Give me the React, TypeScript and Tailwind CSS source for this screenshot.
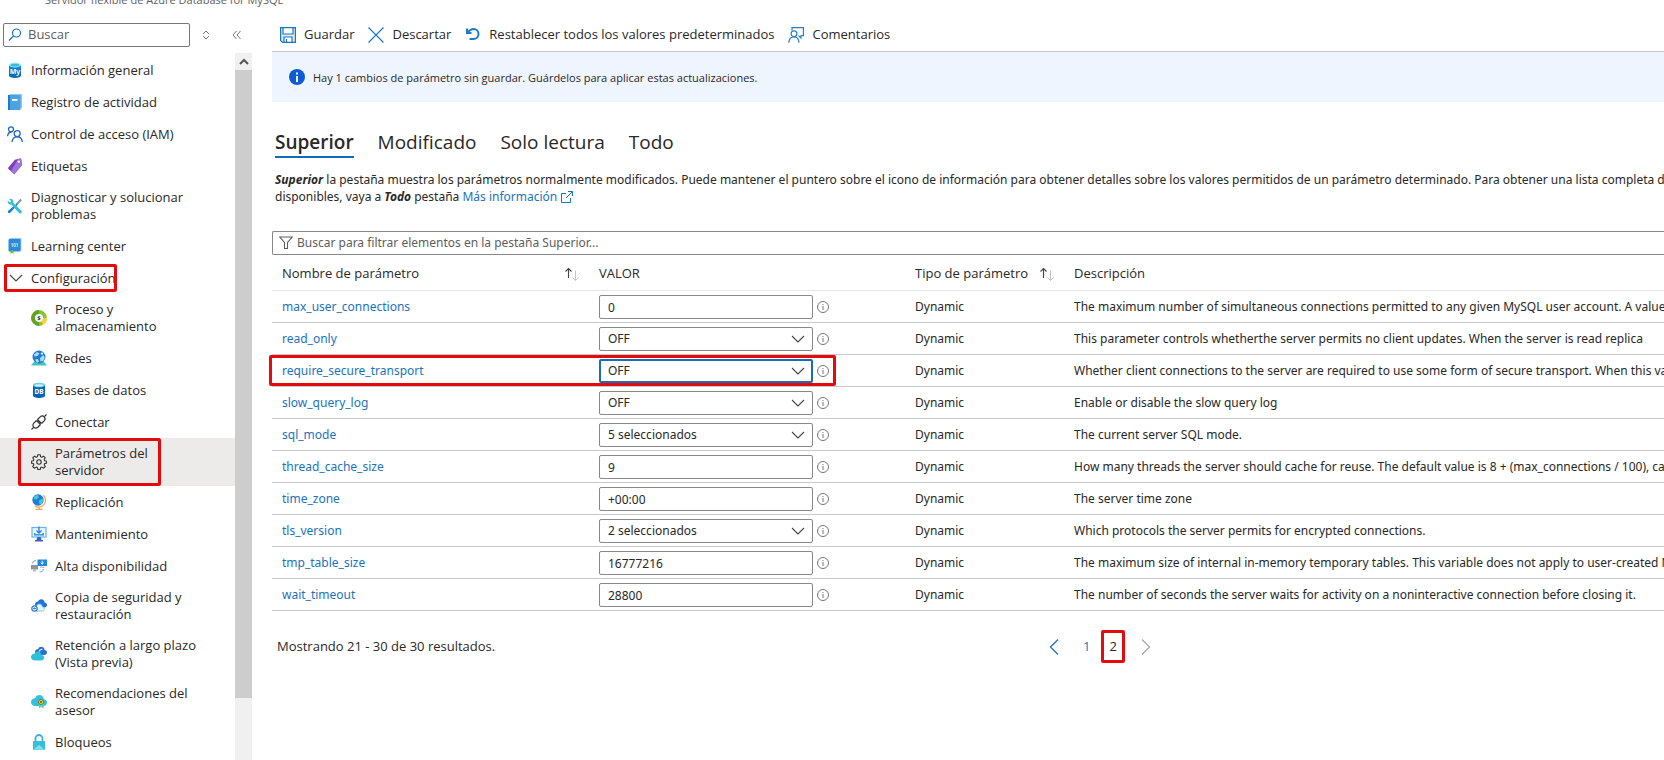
import type { ReactNode } from "react";

type IconProps = { className?: string };

const MySqlIcon = () => (
  <svg viewBox="0 0 16 16" className="size-4">
    <path d="M2 3v10.5C2 14.9 4.7 16 8 16s6-1.1 6-2.5V3z" fill="#0f6cbd" />
    <path d="M2 3v3.5c0 1.2 2.7 2 6 2s6-.8 6-2V3z" fill="#1b7fd0" />
    <ellipse cx="8" cy="3" rx="6" ry="2.4" fill="#9beaf7" />
    <ellipse cx="8" cy="3.2" rx="4.4" ry="1.4" fill="#32bedd" />
    <text x="8" y="12" textAnchor="middle" fontSize="7" fontWeight="700" fill="#fff" fontFamily="Noto Sans">My</text>
  </svg>
);
const LogIcon = () => (
  <svg viewBox="0 0 16 16" className="size-4">
    <path d="M2.5 0h11.7a.8.8 0 0 1 .8.8v13.4H4z" fill="#8fc7f1" />
    <rect x="1" y="1" width="12.6" height="15" rx="1" fill="#4ba3e3" />
    <rect x="1" y="1" width="2" height="15" fill="#2079c4" />
    <rect x="5" y="5" width="5.6" height="1.8" fill="#fff" />
  </svg>
);
const PeopleIcon = () => (
  <svg viewBox="0 0 16 16" className="size-4" fill="none" stroke="#2068c8" strokeWidth="1.3">
    <circle cx="4" cy="3.3" r="2.5" />
    <circle cx="10.2" cy="7.6" r="3" />
    <path d="M.6 10.2C.8 7.6 2 6 4.6 6M5 16c.3-3.2 2.3-5.2 5.2-5.2 2.8 0 4.8 2 5.2 5.2" />
  </svg>
);
const TagIcon = () => (
  <svg viewBox="0 0 16 16" className="size-4">
    <path d="M8.6 1.400 13.200.6c.6 0 1 .3 1.100.9l.5 5c0 .500 0 .800-.3 1.200l-6.600 7.700c-.4.4-.9.400-1.300.1L1.400 11c-.4-.400-.4-1 0-1.400l6.300-7.700c.2-.3.500-.4.900-.5z" fill="#7b3fc0" />
    <path d="m11 1 2.200-.4c.6 0 1 .3 1.100.9l.5 5c0 .500 0 .800-.3 1.200l-6.600 7.700c-.4.4-.9.400-1.300.1L4 13.200z" fill="#a273d8" />
    <circle cx="11.800" cy="3.600" r="1.200" fill="#fff" />
  </svg>
);
const ToolsIcon = () => (
  <svg viewBox="0 0 16 16" className="size-4">
    <path d="M13.8 1.2 9.4 5.8M14.6 2 10 6.4" stroke="#8a9aa5" strokeWidth="1.2" />
    <path d="m9.8 5.4 1 1-7.6 8.4c-.6.6-1.4.6-2 0s-.5-1.4.1-2z" fill="#1a7fc6" />
    <path d="M5.900 2.200C5 .9 3.400.5 2.100 1l2.200 2.200-1.200 1.400L.8 2.500C.3 3.900.8 5.500 2.200 6.300c.7.4 1.500.5 2.200.3l7.400 8.200c.6.7 1.700.9 2.400.3.800-.6.800-1.700.2-2.400L6.500 4.900c.2-.9 0-1.900-.6-2.700z" fill="#32c0dd" />
  </svg>
);
const LearnIcon = () => (
  <svg viewBox="0 0 16 16" className="size-4">
    <path d="M2.800 0h11.600v12.500H2.800z" fill="#8fc7f1" />
    <rect x="1.500" y="1" width="12" height="12.500" rx="1" fill="#2e8ad8" />
    <path d="M3.500 12.500h3V16L5 14.800 3.500 16z" fill="#6fbf3a" />
    <text x="7.500" y="8.500" textAnchor="middle" fontSize="4.500" fontWeight="700" fill="#c4e7ff" fontFamily="Noto Sans">101</text>
  </svg>
);
const ComputeIcon = () => (
  <svg viewBox="0 0 16 16" className="size-4">
    <circle cx="8" cy="8" r="6" fill="#fff" stroke="#86c232" strokeWidth="3.800" />
    <path d="M8 2A6 6 0 0 0 8 14" fill="none" stroke="#5fa524" strokeWidth="3.800" />
    <path d="M14 8A6 6 0 0 1 11 13.100" fill="none" stroke="#ffd02e" strokeWidth="3.800" />
    <text x="8" y="10.300" textAnchor="middle" fontSize="6" fontWeight="700" fill="#222" fontFamily="Noto Sans">$</text>
  </svg>
);
const NetworkIcon = () => (
  <svg viewBox="0 0 16 16" className="size-4">
    <path d="M3.200 11.500h9.600L16 15.500H0z" fill="#3fc9b4" />
    <circle cx="8" cy="7" r="6.500" fill="#1f7ad4" />
    <path d="M3 4.500 6 2l2.500 1.500L6.500 6 3.500 6.500zM9 8l3.500-3 1.300 3-1.500 3-3 .5zM4 9.500l3-.5 1 2.500-2 1.500z" fill="#a5dcfb" />
    <circle cx="11" cy="3.600" r="1.200" fill="#d5f0ff" />
  </svg>
);
const DatabaseIcon = () => (
  <svg viewBox="0 0 16 16" className="size-4">
    <path d="M2 3v10.500C2 14.900 4.700 16 8 16s6-1.100 6-2.500V3z" fill="#0a62b5" />
    <ellipse cx="8" cy="3" rx="6" ry="2.300" fill="#5fd3ea" />
    <ellipse cx="8" cy="3.400" rx="4.200" ry="1.100" fill="#c5f3fa" />
    <text x="8" y="12" textAnchor="middle" fontSize="6.500" fontWeight="700" fill="#fff" fontFamily="Noto Sans">DB</text>
  </svg>
);
const PlugIcon = () => (
  <svg viewBox="0 0 16 16" className="size-4" fill="none" stroke="#333" strokeWidth="1.200">
    <path d="M.5 15.500 2.600 13.400M13.400 2.600 15.500.5M6.500 5.500l4 4M5.500 6.500l4 4" />
    <path d="M6.500 5.500 9.200 2.800c1.200-1.200 2.900-1.200 4 0s1.100 2.800 0 4l-2.700 2.700M5.500 6.500 2.800 9.200c-1.200 1.200-1.200 2.900 0 4s2.800 1.100 4 0l2.700-2.700" />
  </svg>
);
const GearIcon = () => (
  <svg viewBox="0 0 16 16" className="size-4" fill="none" stroke="#333" strokeWidth="1.100" strokeLinejoin="round">
    <path d="M6.800.7h2.400l.4 2 1.300.5 1.700-1.100 1.700 1.700-1.100 1.700.5 1.300 2 .4v1.900l-2 .4-.5 1.300 1.100 1.700-1.700 1.700-1.700-1.100-1.300.5-.4 2H6.800l-.4-2-1.300-.5-1.700 1.100-1.700-1.700 1.100-1.700-.5-1.300-2-.4V7.200l2-.4.5-1.300-1.100-1.700 1.700-1.700 1.700 1.100 1.300-.5z" />
    <circle cx="8" cy="8" r="2.200" />
  </svg>
);
const GlobeIcon = () => (
  <svg viewBox="0 0 16 16" className="size-4">
    <path d="M12.400 1.200a7 7 0 0 1-4 11.900c-1.900.2-3.500-.3-4.700-1.200M8.200 13v2M4.500 15.400h7" fill="none" stroke="#eda35b" strokeWidth="1.200" />
    <circle cx="7" cy="6" r="5.700" fill="#1e7fd2" />
    <path d="M3 2.500 6.500.8 8 3 5.500 5.500 3 5zM8 6.500l3.500-2 1 2-2 3.500-2 .5z" fill="#46c8dc" />
  </svg>
);
const MaintenanceIcon = () => (
  <svg viewBox="0 0 16 16" className="size-4">
    <rect x="1" y="1.500" width="14" height="9.500" fill="#e8f6ff" stroke="#62b5ec" strokeWidth="1.200" />
    <path d="M6.300 11h3.400l.8 3H5.500z" fill="#2a6fbb" />
    <path d="M4 14h8v1.500H4z" fill="#4a5bb8" />
    <path d="M8 .5v6M5.500 4.500 8 7l2.500-2.500M3.800 7v1.800h8.400V7" fill="none" stroke="#2284d8" strokeWidth="1.300" />
  </svg>
);
const AvailabilityIcon = () => (
  <svg viewBox="0 0 16 16" className="size-4">
    <rect x="6.500" y="1.500" width="9.500" height="6.500" fill="#2287dc" />
    <path d="M11.200 2.800v3M9.800 4.800l1.400 1.400 1.400-1.400" stroke="#fff" fill="none" />
    <path d="M9 9.200h4.500" stroke="#b0bac4" strokeWidth="1.200" />
    <rect x="0" y="7" width="7" height="4.500" fill="#8d949d" />
    <path d="M2.500 11.500h2l1 2h-4z" fill="#b2b8bf" />
    <path d="M1.500 5.500c.3-1.800 1.600-3 3.500-3M8.500 13.800c2.200 0 3.600-1 4-3" fill="none" stroke="#7db9ed" strokeWidth="1.100" />
  </svg>
);
const cloudPath = "M12.800 7.300C12.700 4.900 10.800 3 8.400 3 6.500 3 4.900 4.200 4.200 5.900 1.900 6.100 0 7.700 0 9.900 0 12.200 1.900 14 4.300 14h8.200c1.900 0 3.500-1.500 3.500-3.400 0-1.800-1.400-3.200-3.200-3.300z";
const BackupIcon = () => (
  <svg viewBox="0 0 16 16" className="size-4">
    <g transform="translate(4 -1) scale(.75)"><path d={cloudPath} fill="#2272d2" /></g>
    <g transform="translate(3 4) scale(.65)"><path d={cloudPath} fill="#e4f7fd" stroke="#5fc0ec" strokeWidth="1.200" /></g>
    <circle cx="3.500" cy="10.500" r="2.700" fill="#fff" stroke="#2c78cf" strokeWidth="1.200" />
    <path d="M5 10.500H2.500m1-1.200-1.200 1.200 1.200 1.200" stroke="#2c78cf" fill="none" strokeWidth=".9" />
  </svg>
);
const RetentionIcon = () => (
  <svg viewBox="0 0 16 16" className="size-4">
    <g transform="translate(4 -1.5) scale(.75)"><path d={cloudPath} fill="#2b6fd0" /></g>
    <path d="M8 5.500c.6-1.500 2-2.300 3.400-2.100" fill="none" stroke="#d9efff" strokeWidth="1.200" />
    <g transform="translate(0 3) scale(.82)"><path d={cloudPath} fill="#2cc0dd" /></g>
  </svg>
);
const AdvisorIcon = () => (
  <svg viewBox="0 0 16 16" className="size-4">
    <path d={cloudPath} transform="translate(0 -2)" fill="#35c1db" />
    <path d="M8 9.500h4.600v5l-2.300-1.600L8 14.500z" fill="#58d6b4" />
    <circle cx="10" cy="8" r="2.500" fill="#ffd32a" stroke="#6b6b35" strokeWidth=".9" />
    <circle cx="10" cy="8" r=".9" fill="#4e4e32" />
  </svg>
);
const LockIcon = () => (
  <svg viewBox="0 0 16 16" className="size-4">
    <path d="M4.500 8V4.500a3.500 3.500 0 0 1 7 0V8" fill="none" stroke="#37b4d4" strokeWidth="1.800" />
    <rect x="2" y="7" width="12" height="9" rx=".8" fill="#38bedd" />
    <path d="M2.200 15.700 8 11l5.800 4.700z" fill="#7fe0f0" />
  </svg>
);
const ChevronDown = ({ className = "" }: IconProps) => (
  <svg viewBox="0 0 14 14" className={`size-3.5 ${className}`} fill="none" stroke="#444" strokeWidth="1.100">
    <path d="m1 4 6 6 6-6" />
  </svg>
);
const InfoOutline = () => (
  <svg viewBox="0 0 12 12" className="size-3" fill="none" stroke="#767676">
    <circle cx="6" cy="6" r="5.500" />
    <path d="M6 5v4M6 3v1" />
  </svg>
);
const SortIcon = () => (
  <svg viewBox="0 0 16 14" className="h-3.5 w-4" fill="none">
    <path d="M4.500 11V1.500M1.500 4.500l3-3 3 3" stroke="#444" strokeWidth="1.100" />
    <path d="M11.500 3.500v10M8.500 10.500l3 3 3-3" stroke="#c4c4c4" />
  </svg>
);

const SaveIcon = () => (
  <svg viewBox="0 0 16 16" className="size-4" fill="#d8ecfa" stroke="#1f74b8" strokeWidth="1.200">
    <path d="M.6.600h14.800v14.800H2.600l-2-2z" />
    <path d="M3 .600h10v6.400H3zM4 15.400V10h8v5.400z" fill="#fff" />
    <path d="M6.500 12v3.400" />
  </svg>
);
const CloseIcon = () => (
  <svg viewBox="0 0 16 16" className="size-4" fill="none" stroke="#1f7ac4" strokeWidth="1.200">
    <path d="m.5.5 15 15M15.500.5l-15 15" />
  </svg>
);
const UndoIcon = () => (
  <svg viewBox="0 0 16 16" className="size-4" fill="none" stroke="#1f7ac4" strokeWidth="2">
    <path d="M2 1.500V6h4.500M2.500 5.500C4.500 3.200 6.400 2 8.600 2 11.500 2 13.500 4.100 13.500 7s-2.200 5-5 5H4.500" />
  </svg>
);
const FeedbackIcon = () => (
  <svg viewBox="0 0 16 16" className="size-4" fill="none" stroke="#2a80c0" strokeWidth="1.200">
    <path d="M4 3.500V.6h11.400v8H13v2.500l-2.500-2.500" />
    <circle cx="6" cy="6.800" r="2.900" />
    <path d="M.8 15.800C1 12.200 3 9.800 6 9.800s4.800 2.400 5 6" />
  </svg>
);

const mark = "pointer-events-none absolute rounded-xs border-3 border-[#e30b0b]";

type NavEntry = { label: ReactNode; icon: ReactNode; nested?: boolean; active?: boolean };

const topItems: NavEntry[] = [
  { label: "Información general", icon: <MySqlIcon /> },
  { label: "Registro de actividad", icon: <LogIcon /> },
  { label: "Control de acceso (IAM)", icon: <PeopleIcon /> },
  { label: "Etiquetas", icon: <TagIcon /> },
  { label: <>Diagnosticar y solucionar<br />problemas</>, icon: <ToolsIcon /> },
  { label: "Learning center", icon: <LearnIcon /> },
];
const configItems: NavEntry[] = [
  { label: <>Proceso y<br />almacenamiento</>, icon: <ComputeIcon /> },
  { label: "Redes", icon: <NetworkIcon /> },
  { label: "Bases de datos", icon: <DatabaseIcon /> },
  { label: "Conectar", icon: <PlugIcon /> },
  { label: <>Parámetros del<br />servidor</>, icon: <GearIcon />, active: true },
  { label: "Replicación", icon: <GlobeIcon /> },
  { label: "Mantenimiento", icon: <MaintenanceIcon /> },
  { label: "Alta disponibilidad", icon: <AvailabilityIcon /> },
  { label: <>Copia de seguridad y<br />restauración</>, icon: <BackupIcon /> },
  { label: <>Retención a largo plazo<br />(Vista previa)</>, icon: <RetentionIcon /> },
  { label: <>Recomendaciones del<br />asesor</>, icon: <AdvisorIcon /> },
  { label: "Bloqueos", icon: <LockIcon /> },
];

function NavItem({ label, icon, nested, active }: NavEntry) {
  return (
    <li className={active ? "relative bg-[#edebe9]" : ""}>
      <a href="#" aria-current={active ? "page" : undefined} className={`flex min-h-8 items-center gap-2 py-[7px] ${nested ? "pl-[31px]" : "pl-[7px]"}`}>
        <span className="shrink-0">{icon}</span>
        <span>{label}</span>
      </a>
      {active && <span className={`${mark} inset-y-0 left-[18px] w-[143px]`} />}
    </li>
  );
}

type Param = { name: string; value: string; select?: boolean; focused?: boolean; text: string };

const params: Param[] = [
  { name: "max_user_connections", value: "0", text: "The maximum number of simultaneous connections permitted to any given MySQL user account. A value of 0" },
  { name: "read_only", value: "OFF", select: true, text: "This parameter controls whetherthe server permits no client updates. When the server is read replica" },
  { name: "require_secure_transport", value: "OFF", select: true, focused: true, text: "Whether client connections to the server are required to use some form of secure transport. When this variable" },
  { name: "slow_query_log", value: "OFF", select: true, text: "Enable or disable the slow query log" },
  { name: "sql_mode", value: "5 seleccionados", select: true, text: "The current server SQL mode." },
  { name: "thread_cache_size", value: "9", text: "How many threads the server should cache for reuse. The default value is 8 + (max_connections / 100), capped" },
  { name: "time_zone", value: "+00:00", text: "The server time zone" },
  { name: "tls_version", value: "2 seleccionados", select: true, text: "Which protocols the server permits for encrypted connections." },
  { name: "tmp_table_size", value: "16777216", text: "The maximum size of internal in-memory temporary tables. This variable does not apply to user-created MEMORY" },
  { name: "wait_timeout", value: "28800", text: "The number of seconds the server waits for activity on a noninteractive connection before closing it." },
];

function ParamRow({ name, value, select, focused, text }: Param) {
  return (
    <tr className="h-8 border-b border-[#c8c8c8]">
      <td className="relative pt-0.5 pl-2.5">
        <a href="#" className="text-[#1a73bd]">{name}</a>
        {focused && <span className={`${mark} -left-[3px] inset-y-0 z-10 w-[567px]`} />}
      </td>
      <td className="pt-0.5">
        <div className="flex items-center gap-1">
          {select ? (
            <div className="relative w-[214px]">
              <select
                aria-label={name}
                className={`block h-6 w-full appearance-none rounded-xs bg-white outline-none ${focused ? "border-2 border-[#1a6cb5] px-[7px]" : "border border-[#8a8886] px-2"}`}
              >
                <option>{value}</option>
              </select>
              <ChevronDown className="pointer-events-none absolute top-[5px] right-2" />
            </div>
          ) : (
            <input aria-label={name} defaultValue={value} className="block h-6 w-[214px] rounded-xs border border-[#8a8886] bg-white px-2 outline-none" />
          )}
          <button aria-label={`Información sobre ${name}`}><InfoOutline /></button>
        </div>
      </td>
      <td className="pt-0.5">Dynamic</td>
      <td className="overflow-hidden pt-0.5 whitespace-nowrap">{text}</td>
    </tr>
  );
}

const tools = [
  { label: "Guardar", icon: <SaveIcon /> },
  { label: "Descartar", icon: <CloseIcon /> },
  { label: "Restablecer todos los valores predeterminados", icon: <UndoIcon /> },
  { label: "Comentarios", icon: <FeedbackIcon /> },
];

export default function App() {
  return (
    <div className="flex h-screen flex-col overflow-hidden bg-white font-['Open_Sans',sans-serif] text-[13px] leading-[17px] text-[#292827]">
      <header className="flex h-4 shrink-0 flex-col justify-end pl-[45px]">
        <p className="mb-2 text-[11px] leading-4 text-[#605e5c]">Servidor flexible de Azure Database for MySQL</p>
      </header>
      <div className="flex min-h-0 flex-1">
        <aside className="flex w-[252px] shrink-0 flex-col">
          <div className="flex h-[37px] shrink-0 items-center pl-[3px]">
            <label className="flex h-6 w-[187px] items-center gap-1.5 rounded-xs border border-[#767676] pr-1 pl-1">
              <svg viewBox="0 0 14 14" className="size-3.5 shrink-0" fill="none" stroke="#1a73c0" strokeWidth="1.200">
                <circle cx="8.500" cy="5" r="4" />
                <path d="M5.500 8 1 12.500" />
              </svg>
              <input aria-label="Buscar" placeholder="Buscar" className="min-w-0 flex-1 outline-none placeholder:text-[#605e5c]" />
            </label>
            <button aria-label="Ordenar" className="ml-3">
              <svg viewBox="0 0 8 10" className="h-2.5 w-2" fill="none" stroke="#777">
                <path d="m1 4 3-3 3 3M1 6l3 3 3-3" />
              </svg>
            </button>
            <button aria-label="Contraer menú" className="ml-5.5">
              <svg viewBox="0 0 9 10" className="h-2.5 w-[9px]" fill="none" stroke="#777">
                <path d="M4.500 1 1 5l3.500 4M8.500 1 5 5l3.500 4" />
              </svg>
            </button>
          </div>
          <div className="flex min-h-0 flex-1">
            <nav className="min-w-0 flex-1 overflow-hidden pt-px">
              <ul>
                {topItems.map((item, i) => <NavItem key={i} {...item} />)}
                <li className="relative">
                  <button aria-expanded="true" className="flex h-8 items-center gap-2 pl-[9px]">
                    <ChevronDown />
                    <span>Configuración</span>
                  </button>
                  <span className={`${mark} top-0.5 left-1 h-7 w-[113px]`} />
                  <ul>{configItems.map((item, i) => <NavItem key={i} nested {...item} />)}</ul>
                </li>
              </ul>
            </nav>
            <div className="flex w-[17px] flex-col bg-[#f0f0f0]" aria-hidden="true">
              <div className="flex h-[17px] items-center justify-center">
                <svg viewBox="0 0 10 7" className="h-[7px] w-2.5" fill="none" stroke="#555" strokeWidth="2">
                  <path d="m1 6 4-4 4 4" />
                </svg>
              </div>
              <div className="mb-[62px] flex-1 bg-[#cdcdcd]" />
            </div>
          </div>
        </aside>

        <main className="min-w-0 flex-1 overflow-hidden pl-5">
          <div className="flex h-9 items-center gap-3.5 border-b border-[#c8c6c4] pt-0.5 pl-2">
            {tools.map((t) => (
              <button key={t.label} className="flex items-center gap-2">
                {t.icon}
                {t.label}
              </button>
            ))}
          </div>
          <div role="status" className="flex h-[50px] items-center gap-2 bg-[#eff5ff] pl-[17px] text-[11px]">
            <svg viewBox="0 0 16 16" className="size-4">
              <circle cx="8" cy="8" r="8" fill="#0f5bd3" />
              <path d="M8 7v6M8 3.500v2" stroke="#fff" strokeWidth="1.900" />
            </svg>
            Hay 1 cambios de parámetro sin guardar. Guárdelos para aplicar estas actualizaciones.
          </div>

          <div role="tablist" className="mt-[26px] flex gap-6 pl-[3px] text-[19px] leading-7">
            <button role="tab" aria-selected="true" className="border-b-2 border-[#0f6cbd] font-semibold">Superior</button>
            <button role="tab" className="border-b-2 border-transparent">Modificado</button>
            <button role="tab" className="border-b-2 border-transparent">Solo lectura</button>
            <button role="tab" className="border-b-2 border-transparent">Todo</button>
          </div>

          <p className="mt-[13px] pl-[3px] font-['Noto_Sans',sans-serif] text-xs leading-[17px] whitespace-nowrap">
            <strong className="italic">Superior</strong> la pestaña muestra los parámetros normalmente modificados. Puede mantener el puntero sobre el icono de información para obtener detalles sobre los valores permitidos de un parámetro determinado. Para obtener una lista completa de los
            <br />
            disponibles, vaya a <strong className="italic">Todo</strong> pestaña{" "}
            <a href="#" className="inline-flex items-center gap-1 text-[#1a73bd]">
              Más información
              <svg viewBox="0 0 12 12" className="size-3" fill="none" stroke="currentColor">
                <path d="M5 2.500H.5v9h9V7M7 .5h4.500V5M11.500.5 5 7" />
              </svg>
            </a>
          </p>

          <label className="mt-[26px] flex h-6 items-center gap-1 rounded-l-xs border border-r-0 border-[#8a8886] pl-1.5">
            <svg viewBox="0 0 14 14" className="size-3.5 shrink-0" fill="none" stroke="#605e5c" strokeWidth="1.100">
              <path d="M.8 1h12.400L8.500 6.500V12.500h-3v-6z" />
            </svg>
            <input aria-label="Filtrar" placeholder="Buscar para filtrar elementos en la pestaña Superior..." className="min-w-0 flex-1 font-['Noto_Sans',sans-serif] text-xs outline-none placeholder:text-[#605e5c]" />
          </label>

          <table className="w-full table-fixed border-collapse text-left">
            <colgroup>
              <col className="w-[327px]" />
              <col className="w-[316px]" />
              <col className="w-[159px]" />
              <col />
            </colgroup>
            <thead>
              <tr className="h-[35px] border-b border-[#e5e5e5]">
                <th className="pt-[3px] pr-[19px] pl-2.5 font-medium">
                  <button className="flex w-full items-center justify-between">Nombre de parámetro<SortIcon /></button>
                </th>
                <th className="pt-[3px] font-medium">VALOR</th>
                <th className="pt-[3px] pr-[19px] font-medium">
                  <button className="flex w-full items-center justify-between">Tipo de parámetro<SortIcon /></button>
                </th>
                <th className="pt-[3px] font-medium">Descripción</th>
              </tr>
            </thead>
            <tbody className="font-['Noto_Sans',sans-serif] text-xs">{params.map((p) => <ParamRow key={p.name} {...p} />)}</tbody>
          </table>

          <footer className="mt-4 grid h-10 grid-cols-[772px_1fr] items-center pl-[5px]">
            <p>Mostrando 21 - 30 de 30 resultados.</p>
            <nav aria-label="Paginación" className="flex items-center">
              <button aria-label="Anterior">
                <svg viewBox="0 0 10 16" className="h-4 w-2.5" fill="none" stroke="#1a73c0" strokeWidth="1.300"><path d="M9 .5 1.500 8 9 15.500" /></svg>
              </button>
              <button className="ml-6 text-[#1a73bd]">1</button>
              <button aria-current="page" className="relative ml-[19px]">
                2
                <span className={`${mark} -inset-x-2 -inset-y-2`} />
              </button>
              <button aria-label="Siguiente" className="ml-6">
                <svg viewBox="0 0 10 16" className="h-4 w-2.5" fill="none" stroke="#a0a0a0" strokeWidth="1.100"><path d="M1 .5 8.500 8 1 15.500" /></svg>
              </button>
            </nav>
          </footer>
        </main>
      </div>
    </div>
  );
}
